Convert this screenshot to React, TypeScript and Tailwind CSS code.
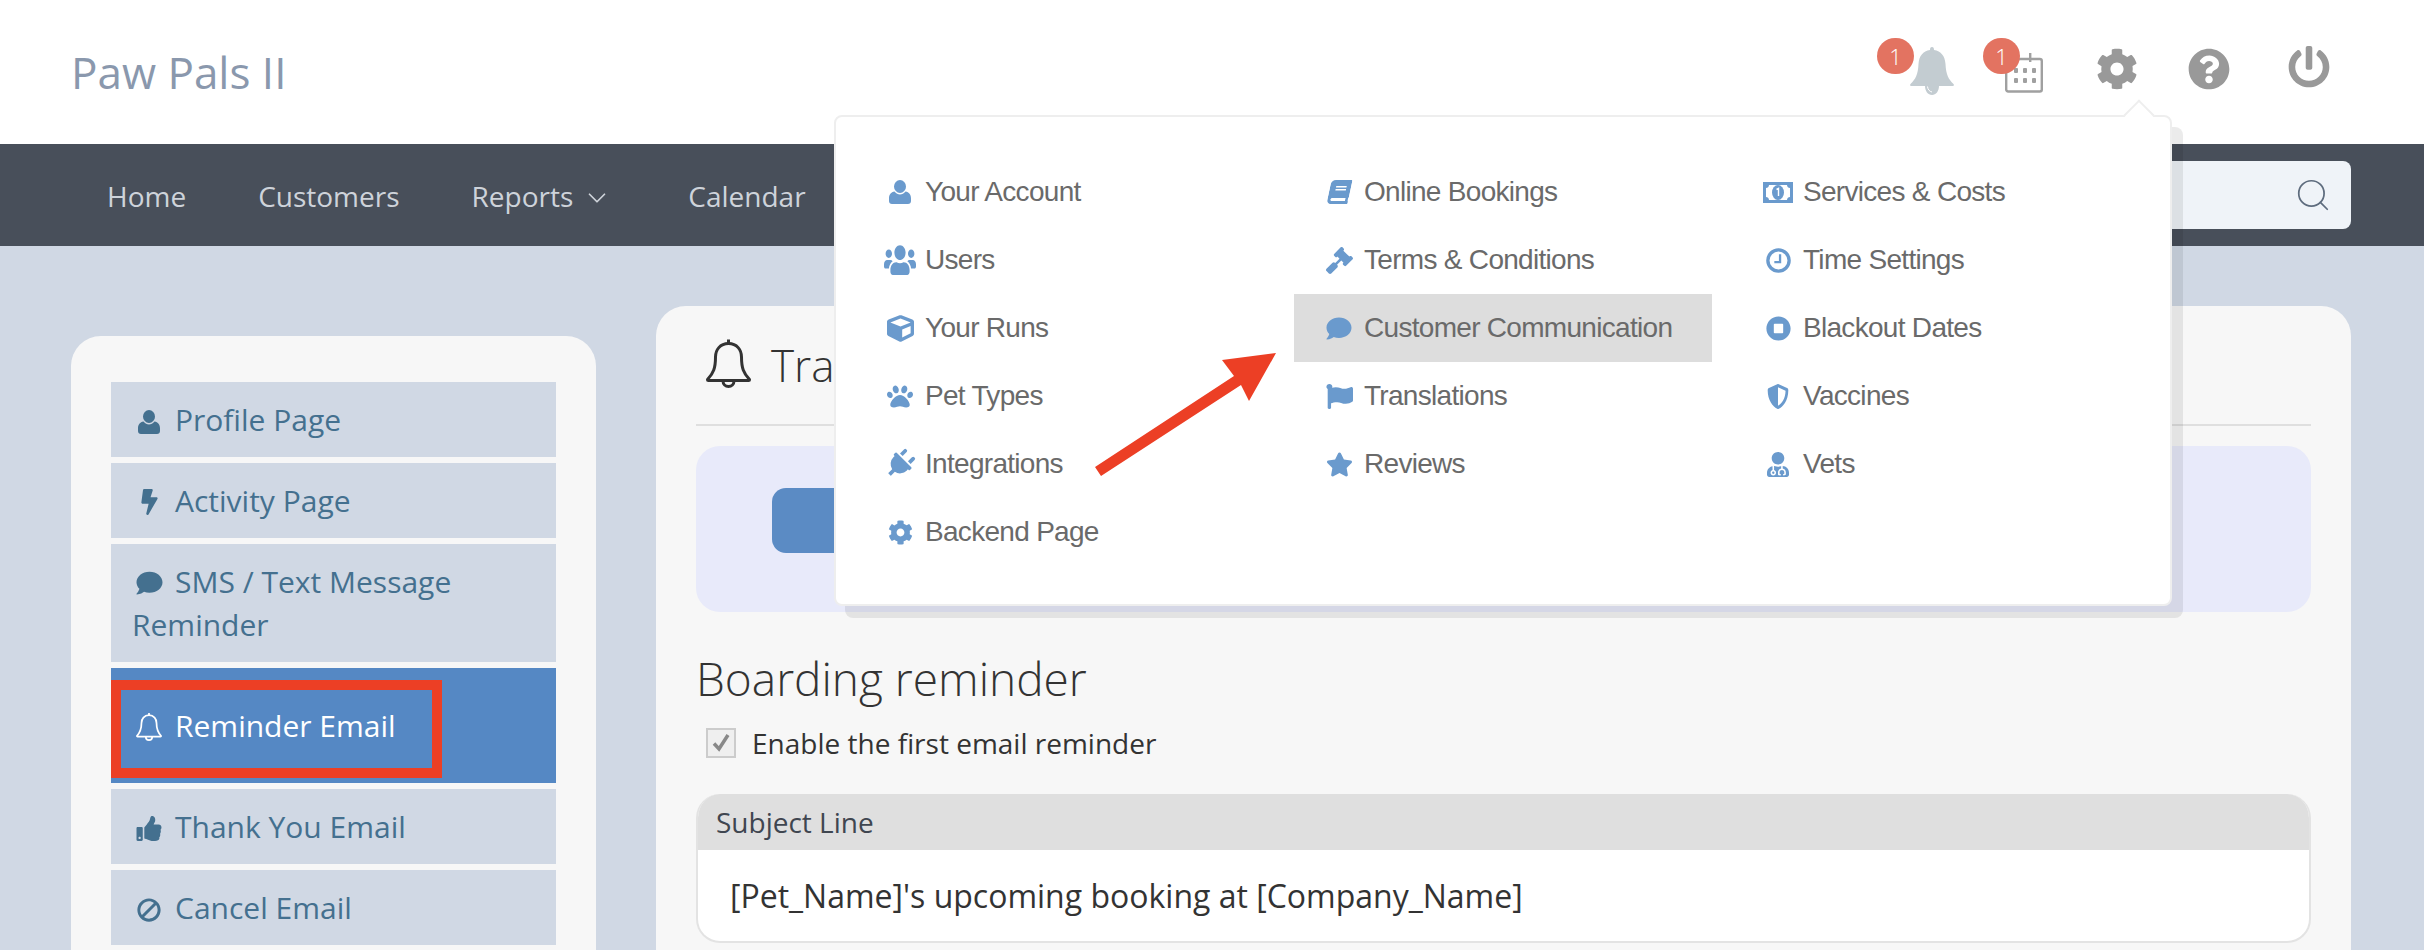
import React from 'react';
import { ChevronDown, Search } from 'lucide-react';
import {
  FaBan, FaBolt, FaBook, FaCog, FaComment, FaCube, FaFlag, FaGavel, FaPaw, FaPlug, FaPowerOff,
  FaQuestionCircle, FaShieldAlt, FaStar, FaStopCircle, FaThumbsUp, FaUserMd, FaUsers,
} from 'react-icons/fa';

const BellOutline = ({ className }: { className: string }) => (
  <svg viewBox="0 0 45 50" className={className} fill="none" stroke="currentColor" strokeWidth="3" strokeLinejoin="round">
    <path d="M22.5 1.5v4" />
    <path d="M22.5 5.5C14 5.5 9.5 12 9.5 19c0 11-2 16-8 22.5a1 1 0 0 0 1 1h40a1 1 0 0 0 1-1c-6-6.500-8-11.500-8-22.500 0-7-4.500-13.500-13-13.500Z" />
    <path d="M17 43a5.500 5.500 0 0 0 11 0" />
  </svg>
);

const BellSolid = () => (
  <svg viewBox="0 0 44 48" className="h-[48px] w-[44px] text-[#c3ccd1]" fill="currentColor">
    <path d="M22 0c1.500 0 2 1 2 3 7 1 11 6 11.500 14 .5 11 3 15 8 20 .8 1 .3 2-1 2H29c0 5-3 9-7 9s-7-4-7-9H1.500c-1.300 0-1.800-1-1-2 5-5 7.500-9 8-20C9 9 13 4 20 3c0-2 .5-3 2-3Z" />
    <path d="M17.500 39.500c.3 3 2 5 4.500 5.500" fill="none" stroke="#fff" strokeWidth="1" />
  </svg>
);

const CalendarIcon = () => (
  <svg viewBox="0 0 38 40" className="h-[40px] w-[38px] text-[#a0a0a0]" fill="currentColor">
    <rect x="1.200" y="6" width="35.600" height="32.500" rx="2" fill="none" stroke="currentColor" strokeWidth="2.400" />
    <rect x="24" y="0" width="2.400" height="9" />
    {[9, 18, 27].map((x) => (
      <React.Fragment key={x}>
        <rect x={x} y="15" width="4" height="5" rx="1" />
        <rect x={x} y="25" width="4" height="5" rx="1" />
      </React.Fragment>
    ))}
  </svg>
);

const MoneyIcon = ({ className }: { className?: string }) => (
  <svg viewBox="0 0 30 21" className={className} fill="currentColor">
    <path fillRule="evenodd" d="M0 0h30v21H0ZM6 3c0 2-1.500 3-3 3v9c1.500 0 3 1 3 3h18c0-2 1.500-3 3-3V6c-1.500 0-3-1-3-3Z" />
    <ellipse cx="15" cy="10.500" rx="6" ry="7.500" />
    <path d="M13.500 7.500 15.500 6.500V14" fill="none" stroke="#fff" strokeWidth="1.400" />
  </svg>
);

const UserIcon = ({ className }: { className?: string }) => (
  <svg viewBox="0 0 22 24" className={className} fill="currentColor">
    <ellipse cx="11" cy="6.500" rx="6" ry="6.500" />
    <path d="M5.500 11.500C7 13.500 9 14.500 11 14.500s4-1 5.500-3c3.500.5 5.500 3 5.500 7v2.500c0 2-1.200 3-3 3H3c-1.800 0-3-1-3-3v-2.500c0-4 2-6.500 5.500-7Z" />
  </svg>
);

const ClockIcon = ({ className }: { className?: string }) => (
  <svg viewBox="0 0 24 24" className={className} fill="none" stroke="currentColor">
    <circle cx="12" cy="12" r="10.200" strokeWidth="3.200" />
    <path d="M13.500 6v7.500H8" strokeWidth="2.200" />
  </svg>
);

const sideItems = [
  { label: 'Profile Page', icon: <UserIcon className="h-[24px] w-[22px]" /> },
  { label: 'Activity Page', icon: <FaBolt className="h-[26px] w-[17px]" /> },
];

const sideItemsAfter = [
  { label: 'Thank You Email', icon: <FaThumbsUp className="h-[25px] w-[26px]" /> },
  { label: 'Cancel Email', icon: <FaBan className="h-[24px] w-[24px] -scale-x-100" /> },
];

const menuColumns = [
  [
    { label: 'Your Account', icon: <UserIcon className="h-[24px] w-[22px]" /> },
    { label: 'Users', icon: <FaUsers preserveAspectRatio="none" className="h-[34px] w-[33px]" /> },
    { label: 'Your Runs', icon: <FaCube className="h-[27px] w-[27px]" /> },
    { label: 'Pet Types', icon: <FaPaw preserveAspectRatio="none" className="h-[25px] w-[26px]" /> },
    { label: 'Integrations', icon: <FaPlug className="h-[30px] w-[30px] rotate-45" /> },
    { label: 'Backend Page', icon: <FaCog className="h-[25px] w-[25px]" /> },
  ],
  [
    { label: 'Online Bookings', icon: <FaBook preserveAspectRatio="none" className="h-[24px] w-[21px] -skew-x-12" /> },
    { label: 'Terms & Conditions', icon: <FaGavel className="h-[27px] w-[27px]" /> },
    { label: 'Customer Communication', icon: <FaComment className="h-[25px] w-[28px]" />, active: true },
    { label: 'Translations', icon: <FaFlag preserveAspectRatio="none" className="h-[25px] w-[27px]" /> },
    { label: 'Reviews', icon: <FaStar className="h-[25px] w-[27px]" /> },
  ],
  [
    { label: 'Services & Costs', icon: <MoneyIcon className="h-[21px] w-[30px]" /> },
    { label: 'Time Settings', icon: <ClockIcon className="h-[25px] w-[25px]" /> },
    { label: 'Blackout Dates', icon: <FaStopCircle className="h-[25px] w-[25px]" /> },
    { label: 'Vaccines', icon: <FaShieldAlt preserveAspectRatio="none" className="h-[25px] w-[22px]" /> },
    { label: 'Vets', icon: <FaUserMd preserveAspectRatio="none" className="h-[25px] w-[22px]" /> },
  ],
];

const SideItem = ({ icon, label }: { icon: React.ReactNode; label: string }) => (
  <div className="bg-[#d0d8e4] px-[21px] py-[16px] text-[#44708f]">
    <span className="mr-[9px] inline-flex w-[34px] justify-center align-[-3px]">{icon}</span>
    {label}
  </div>
);

const App = () => {
  return (
    <div className="relative h-[950px] overflow-hidden bg-[#d0d8e4] font-['Open_Sans',sans-serif]">
      <header className="flex h-[144px] items-start justify-between bg-white pl-[71px]">
        <div className="mt-[43px] text-[44px] leading-[58px] text-[#8a98ad]">Paw Pals II</div>
        <div className="relative mr-[94px] mt-[38px] flex items-start">
          <div className="relative ml-[33px] mt-[9px]">
            <BellSolid />
            <span className="absolute -left-[33px] -top-[9px] flex h-[36px] w-[37px] items-center justify-center rounded-full bg-[#e37361] text-[22px] font-light text-white">1</span>
          </div>
          <div className="relative ml-[51px] mt-[15px]">
            <CalendarIcon />
            <span className="absolute -left-[22px] -top-[15px] flex h-[36px] w-[37px] items-center justify-center rounded-full bg-[#e37361] text-[22px] font-light text-white">1</span>
          </div>
          <FaCog className="ml-[53px] mt-[10px] h-[42px] w-[42px] text-[#999]" />
          <FaQuestionCircle className="ml-[50px] mt-[10px] h-[42px] w-[42px] text-[#999]" />
          <FaPowerOff className="ml-[58px] mt-[7px] h-[44px] w-[42px] text-[#999]" />
        </div>
      </header>

      <nav className="flex h-[102px] items-center bg-[#484f5a] pl-[107px] pr-[73px] text-[28px] text-[#ced3da]">
        <span className="mt-[1px]">Home</span>
        <span className="ml-[72px] mt-[1px]">Customers</span>
        <span className="ml-[72px] mt-[1px]">Reports</span>
        <ChevronDown className="ml-[9px] mt-[5px] h-[30px] w-[30px]" strokeWidth={1.4} />
        <span className="ml-[76px] mt-[1px]">Calendar</span>
        <div className="ml-auto flex h-[68px] w-[500px] items-center justify-end rounded-lg bg-[#eff3f8] pr-[19px] text-[#5e6c7e]">
          <Search className="h-[38px] w-[38px]" strokeWidth={1.1} />
        </div>
      </nav>

      <div className="flex items-start gap-[60px] pl-[71px] pt-[60px]">
        <aside className="mt-[30px] h-[700px] w-[525px] rounded-t-[30px] bg-[#f7f7f7] px-[40px] pt-[46px]">
          <div className="flex flex-col gap-[6px] text-[30px] leading-[43px]">
            {sideItems.map((item) => (
              <SideItem key={item.label} icon={item.icon} label={item.label} />
            ))}
            <SideItem icon={<FaComment className="h-[26px] w-[29px]" />} label="SMS / Text Message Reminder" />
            <div className="relative bg-[#5588c4] px-[21px] py-[36px] text-white">
              <span className="mr-[9px] inline-flex w-[34px] justify-center align-[-4px]">
                <BellOutline className="h-[29px] w-[26px]" />
              </span>
              Reminder Email
              <div className="absolute left-0 top-[12px] h-[98px] w-[331px] border-[10px] border-[#ec3f25]" />
            </div>
            {sideItemsAfter.map((item) => (
              <SideItem key={item.label} icon={item.icon} label={item.label} />
            ))}
          </div>
        </aside>

        <main className="h-[700px] w-[1695px] rounded-t-[30px] bg-[#f7f7f7] px-[40px]">
          <div className="flex h-[120px] items-center border-b-2 border-[#dfdfdf] pl-[10px] text-[44px] font-light text-[#333]">
            <BellOutline className="mr-[20px] mt-[-4px] h-[50px] w-[45px]" />
            Tra
          </div>
          <div className="mt-[20px] h-[166px] rounded-[24px] bg-[#e8eafa] pl-[76px] pt-[42px]">
            <div className="h-[65px] w-[120px] rounded-[14px] bg-[#5b8bc4]" />
          </div>
          <h2 className="mt-[36px] text-[46px] font-light leading-[61px] text-[#333]">Boarding reminder</h2>
          <label className="mt-[14px] flex items-center pl-[10px] text-[28px] leading-[40px] text-[#333]">
            <span className="mr-[16px] flex h-[30px] w-[30px] items-center justify-center border-2 border-[#ccc] bg-[#efefef]">
              <svg viewBox="0 0 20 20" className="h-[20px] w-[20px]" fill="none" stroke="#888" strokeWidth="3.500">
                <path d="M3 10.500 8 16 17 2" />
              </svg>
            </span>
            Enable the first email reminder
          </label>
          <div className="mt-[31px] overflow-hidden rounded-[24px] border-x-2 border-b-2 border-[#e3e3e3] bg-white">
            <div className="-mx-[2px] flex h-[56px] items-center bg-[#dfdfdf] pl-[20px] text-[28px] text-[#3f4650]">Subject Line</div>
            <div className="flex h-[91px] items-center pl-[32px] text-[32px] text-[#333]">[Pet_Name]'s upcoming booking at [Company_Name]</div>
          </div>
        </main>
      </div>

      {/* settings menu */}
      <div className="absolute left-[834px] top-[115px] h-[491px] w-[1338px] rounded-lg border-2 border-[#eee] bg-white pl-[19px] pt-[41px] shadow-[11px_12px_0_rgba(0,0,0,0.08)]">
        <div className="absolute -top-[13px] left-[1292px] h-[22px] w-[22px] rotate-45 border-l-2 border-t-2 border-[#eee] bg-white" />
        <div className="grid grid-cols-[418px_418px_418px] gap-x-[21px] font-['Liberation_Sans',sans-serif] text-[28px] tracking-[-0.7px] text-[#6a6a6a]">
          {menuColumns.map((col, i) => (
            <div key={i}>
              {col.map((item) => (
                <div key={item.label} className={`flex h-[68px] items-center pl-[29px] ${item.active ? 'bg-[#dddddd]' : ''}`}>
                  <span className="mr-[9px] flex w-[32px] justify-center text-[#6a9acd]">{item.icon}</span>
                  {item.label}
                </div>
              ))}
            </div>
          ))}
        </div>
      </div>

      {/* annotation arrow */}
      <svg className="pointer-events-none absolute left-[1090px] top-[350px] h-[130px] w-[190px]" viewBox="1090 350 190 130">
        <polygon points="1095,467 1234,376 1222,360 1276,353 1249,401 1241,385 1101,476" fill="#ec3f25" />
      </svg>
    </div>
  );
};

export default App;
